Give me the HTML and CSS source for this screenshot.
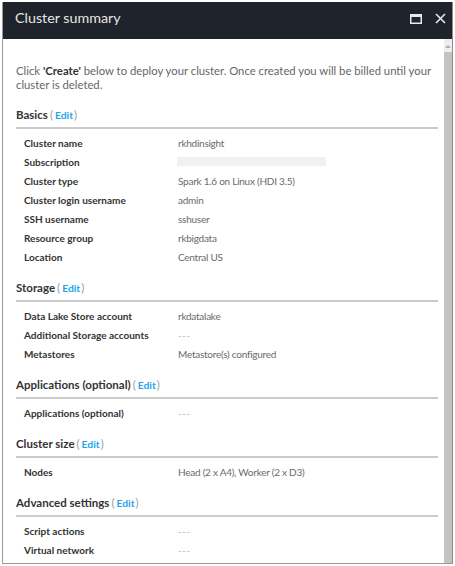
FILE: index.html
```html
<!DOCTYPE html>
<html lang="en">
<head>
<meta charset="utf-8">
<title>Cluster summary</title>
<link rel="stylesheet" href="styles.css">
</head>
<body>
<div class="window">
  <header class="titlebar">
    <h1 class="title">Cluster summary</h1>
    <div class="controls">
      <svg class="icon-max" width="12" height="10" viewBox="0 0 12 10" aria-hidden="true">
        <rect x="0.75" y="0.75" width="10.5" height="8.5" fill="none" stroke="#e8e8e8" stroke-width="1.5"/>
        <rect x="0" y="0" width="12" height="3" fill="#e8e8e8"/>
      </svg>
      <svg class="icon-close" width="11" height="11" viewBox="0 0 11 11" aria-hidden="true">
        <path d="M1 1 L10 10 M10 1 L1 10" stroke="#e8e8e8" stroke-width="1.6" fill="none"/>
      </svg>
    </div>
  </header>
  <div class="body">
    <main class="content">
      <p class="intro">Click <b>'Create'</b> below to deploy your cluster. Once created you will be billed until your cluster is deleted.</p>

      <section class="section first">
        <h2 class="heading">Basics<span class="paren open">(</span><a class="edit">Edit</a><span class="paren">)</span></h2>
        <div class="rows">
          <div class="label">Cluster name</div><div class="value">rkhdinsight</div>
          <div class="label">Subscription</div><div class="value"><span class="redacted"></span></div>
          <div class="label">Cluster type</div><div class="value">Spark 1.6 on Linux (HDI 3.5)</div>
          <div class="label">Cluster login username</div><div class="value">admin</div>
          <div class="label">SSH username</div><div class="value">sshuser</div>
          <div class="label">Resource group</div><div class="value">rkbigdata</div>
          <div class="label">Location</div><div class="value">Central US</div>
        </div>
      </section>

      <section class="section">
        <h2 class="heading">Storage<span class="paren open">(</span><a class="edit">Edit</a><span class="paren">)</span></h2>
        <div class="rows">
          <div class="label">Data Lake Store account</div><div class="value">rkdatalake</div>
          <div class="label">Additional Storage accounts</div><div class="value dash">---</div>
          <div class="label">Metastores</div><div class="value">Metastore(s) configured</div>
        </div>
      </section>

      <section class="section">
        <h2 class="heading">Applications (optional)<span class="paren open">(</span><a class="edit">Edit</a><span class="paren">)</span></h2>
        <div class="rows">
          <div class="label">Applications (optional)</div><div class="value dash">---</div>
        </div>
      </section>

      <section class="section">
        <h2 class="heading">Cluster size<span class="paren open">(</span><a class="edit">Edit</a><span class="paren">)</span></h2>
        <div class="rows">
          <div class="label">Nodes</div><div class="value">Head (2 x A4), Worker (2 x D3)</div>
        </div>
      </section>

      <section class="section">
        <h2 class="heading">Advanced settings<span class="paren open">(</span><a class="edit">Edit</a><span class="paren">)</span></h2>
        <div class="rows">
          <div class="label">Script actions</div><div class="value dash">---</div>
          <div class="label">Virtual network</div><div class="value dash">---</div>
        </div>
      </section>
    </main>
    <div class="scrollbar">
      <div class="arrow"></div>
      <div class="thumb"></div>
    </div>
  </div>
</div>
</body>
</html>
```

FILE: styles.css
```css
* { box-sizing: border-box; }

html, body {
  margin: 0;
  padding: 0;
  background: #ffffff;
}

body {
  font-family: Lato, "Open Sans", "Liberation Sans", sans-serif;
  padding: 2px;
}

.window {
  width: 451px;
  height: 562px;
  display: flex;
  flex-direction: column;
  border-left: 1px solid #9a9a9a;
  border-right: 1px solid #8c8c8c;
  border-bottom: 1px solid #9a9a9a;
  overflow: hidden;
}

.titlebar {
  height: 37px;
  flex: none;
  background: #1f232b;
  display: flex;
  align-items: center;
  justify-content: space-between;
  padding: 0 7px 6px 13px;
  margin: 0 -1px;
}

.title {
  margin: 0;
  font-weight: 400;
  font-size: 14.3px;
  color: #e6e6e6;
}

.controls {
  display: flex;
  align-items: center;
  gap: 13px;
  padding-top: 2px;
}

.icon-max, .icon-close { display: block; }

.body {
  flex: 1;
  display: flex;
  min-height: 0;
}

.content {
  flex: 1;
  padding: 25px 6px 0 13px;
  overflow: hidden;
}

.intro {
  margin: 0;
  font-size: 11.3px;
  line-height: 14px;
  color: #666666;
}
.intro b { color: #333333; font-weight: 700; }

.section { margin-top: 14px; }
.section.first { margin-top: 15px; }

.heading {
  margin: 0;
  height: 22px;
  font-size: 11.5px;
  font-weight: 700;
  line-height: 16px;
  color: #333333;
  padding-bottom: 4px;
  border-bottom: 2px solid #cbcbcb;
  white-space: nowrap;
}

.paren {
  color: #9a9a9a;
  font-weight: 400;
}
.paren.open { margin-left: 2px; }

.edit {
  color: #1ba6ec;
  font-size: 10.3px;
  font-weight: 700;
  margin: 0 1px 0 2px;
}

.rows {
  display: grid;
  grid-template-columns: 154px 1fr;
  grid-auto-rows: 19px;
  align-items: center;
  padding: 4px 0 0 8px;
}

.label {
  font-size: 10px;
  font-weight: 700;
  color: #333333;
  white-space: nowrap;
}

.value {
  font-size: 10px;
  letter-spacing: -0.25px;
  color: #6a6a6a;
  white-space: nowrap;
}

.value.dash { color: #b8b8b8; letter-spacing: 0.5px; }

.redacted {
  display: block;
  width: 149px;
  height: 9px;
  background: #f1f1f1;
  margin-left: -1px;
}

.scrollbar {
  width: 8px;
  flex: none;
  background: #eeeeee;
  display: flex;
  flex-direction: column;
  align-items: center;
  padding-top: 6px;
}

.arrow {
  width: 0;
  height: 0;
  border-left: 3px solid transparent;
  border-right: 3px solid transparent;
  border-bottom: 3px solid #b0b0b0;
  flex: none;
}

.thumb {
  margin-top: 4px;
  width: 8px;
  flex: 1;
  background: #c3c3c3;
}
```
